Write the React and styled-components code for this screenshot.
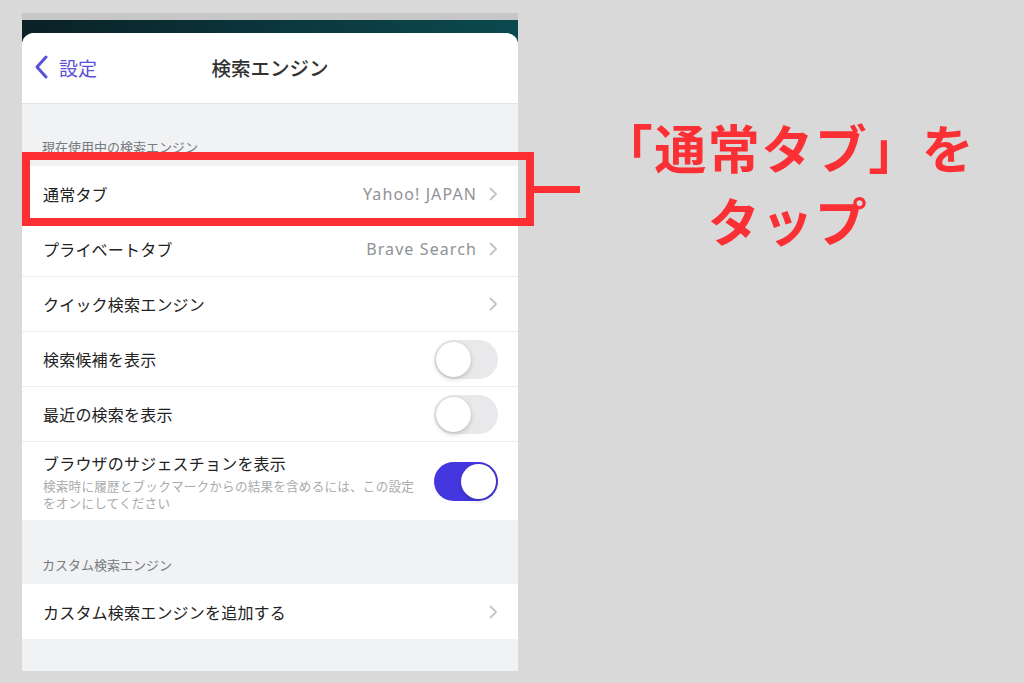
import React from "react";
import styled, { createGlobalStyle } from "styled-components";

const Global = createGlobalStyle`
  html, body { margin: 0; padding: 0; background: #d9d9d9; }
  body { font-family: "Noto Sans CJK JP", "Noto Sans", sans-serif; }
  * { box-sizing: border-box; }
`;

const Page = styled.div`
  position: relative;
  width: 1024px;
  height: 683px;
  display: flex;
  align-items: flex-start;
  padding: 13px 0 0 22px;
  overflow: hidden;
`;

const Phone = styled.div`
  width: 496px;
  height: 658px;
  display: flex;
  flex-direction: column;
  background: #c7c7c7;
  padding-top: 7px;
`;

const Backdrop = styled.div`
  flex: 1;
  display: flex;
  flex-direction: column;
  padding-top: 13px;
  background: linear-gradient(90deg, #0a2126 0%, #0b3a40 60%, #0b4a50 100%);
`;

const Sheet = styled.div`
  flex: 1;
  display: flex;
  flex-direction: column;
  background: #f1f2f4;
  border-radius: 12px 12px 0 0;
  overflow: hidden;
`;

const NavBar = styled.div`
  position: relative;
  height: 71px;
  flex-shrink: 0;
  background: #fff;
  border-bottom: 1px solid #e2e3e5;
  display: flex;
  align-items: center;
  justify-content: center;
`;

const Back = styled.div`
  position: absolute;
  left: 12px;
  top: 0;
  bottom: 0;
  display: flex;
  align-items: center;
  gap: 11px;
  color: #5a4fd6;
  font-size: 19px;
  padding-bottom: 2px;
`;

const Title = styled.div`
  font-size: 19.5px;
  color: #333;
  font-weight: 500;
  padding-bottom: 2px;
`;

const SectionLabel = styled.div`
  height: ${(p) => p.h}px;
  display: flex;
  align-items: flex-end;
  padding: 0 0 10px 20px;
  font-size: 13px;
  color: #777a80;
`;

const Group = styled.div`
  background: #fff;
  display: flex;
  flex-direction: column;
`;

const Row = styled.div`
  min-height: ${(p) => (p.tall ? 79 : 55)}px;
  display: flex;
  align-items: center;
  padding: 0 20px 0 21px;
  border-top: ${(p) => (p.first ? "none" : "1px solid #ececee")};
  gap: 12px;
`;

const RowText = styled.div`
  flex: 1;
  display: flex;
  flex-direction: column;
  gap: 3px;
`;

const Label = styled.div`
  font-size: 16px;
  color: #222;
  line-height: 22px;
  letter-spacing: 0.2px;
`;

const Sub = styled.div`
  font-size: 12.6px;
  color: #a9abae;
  line-height: 17px;
  letter-spacing: 0.2px;
`;

const Value = styled.div`
  font-family: "Noto Sans", "Noto Sans CJK JP", sans-serif;
  font-size: 16px;
  color: #909296;
  letter-spacing: 1.1px;
`;

const Chevron = () => (
  <svg width="9" height="14" viewBox="0 0 9 14" style={{ flexShrink: 0 }}>
    <polyline points="1.5,1.5 7,7 1.5,12.5" fill="none" stroke="#c4c5c8" strokeWidth="1.8" strokeLinecap="round" strokeLinejoin="round" />
  </svg>
);

const Track = styled.div`
  width: 64px;
  height: 39px;
  border-radius: 20px;
  flex-shrink: 0;
  background: ${(p) => (p.on ? "#4537e0" : "#e9e9eb")};
  display: flex;
  align-items: center;
  justify-content: ${(p) => (p.on ? "flex-end" : "flex-start")};
  padding: 2px;
`;

const Knob = styled.div`
  width: 35px;
  height: 35px;
  border-radius: 50%;
  background: #fff;
  box-shadow: 0 2px 5px rgba(0, 0, 0, 0.18), 0 0 1px rgba(0, 0, 0, 0.15);
`;

const Toggle = ({ on }) => (
  <Track on={on ? 1 : 0}>
    <Knob />
  </Track>
);

const Filler = styled.div`
  flex: 1;
`;

const Highlight = styled.div`
  position: absolute;
  left: 22px;
  top: 152px;
  width: 512px;
  height: 74px;
  border: 8.5px solid #fd2f32;
`;

const Connector = styled.div`
  position: absolute;
  left: 534px;
  top: 186px;
  width: 46px;
  height: 7px;
  background: #fd2f32;
`;

const Callout = styled.div`
  flex: 1;
  padding: 97px 0 0 34px;
  text-align: center;
  color: #fb3034;
  font-size: 52px;
  font-weight: 700;
  line-height: 73px;
  letter-spacing: 1.5px;
`;

export default function App() {
  return (
    <>
      <Global />
      <Page>
        <Phone>
          <Backdrop>
            <Sheet>
              <NavBar>
                <Back>
                  <svg width="14" height="24" viewBox="0 0 14 24">
                    <polyline points="12,2 3,12 12,22" fill="none" stroke="#5a4fd6" strokeWidth="3" strokeLinecap="round" strokeLinejoin="round" />
                  </svg>
                  <span>設定</span>
                </Back>
                <Title>検索エンジン</Title>
              </NavBar>
              <SectionLabel h={62}>現在使用中の検索エンジン</SectionLabel>
              <Group>
                <Row first>
                  <RowText><Label>通常タブ</Label></RowText>
                  <Value>Yahoo! JAPAN</Value>
                  <Chevron />
                </Row>
                <Row>
                  <RowText><Label>プライベートタブ</Label></RowText>
                  <Value>Brave Search</Value>
                  <Chevron />
                </Row>
                <Row>
                  <RowText><Label>クイック検索エンジン</Label></RowText>
                  <Chevron />
                </Row>
                <Row>
                  <RowText><Label>検索候補を表示</Label></RowText>
                  <Toggle />
                </Row>
                <Row>
                  <RowText><Label>最近の検索を表示</Label></RowText>
                  <Toggle />
                </Row>
                <Row tall>
                  <RowText>
                    <Label>ブラウザのサジェスチョンを表示</Label>
                    <Sub>検索時に履歴とブックマークからの結果を含めるには、この設定をオンにしてください</Sub>
                  </RowText>
                  <Toggle on />
                </Row>
              </Group>
              <SectionLabel h={64}>カスタム検索エンジン</SectionLabel>
              <Group>
                <Row first>
                  <RowText><Label>カスタム検索エンジンを追加する</Label></RowText>
                  <Chevron />
                </Row>
              </Group>
              <Filler />
            </Sheet>
          </Backdrop>
        </Phone>
        <Callout>
          <div>「通常タブ」を</div>
          <div>タップ</div>
        </Callout>
        <Highlight />
        <Connector />
      </Page>
    </>
  );
}
